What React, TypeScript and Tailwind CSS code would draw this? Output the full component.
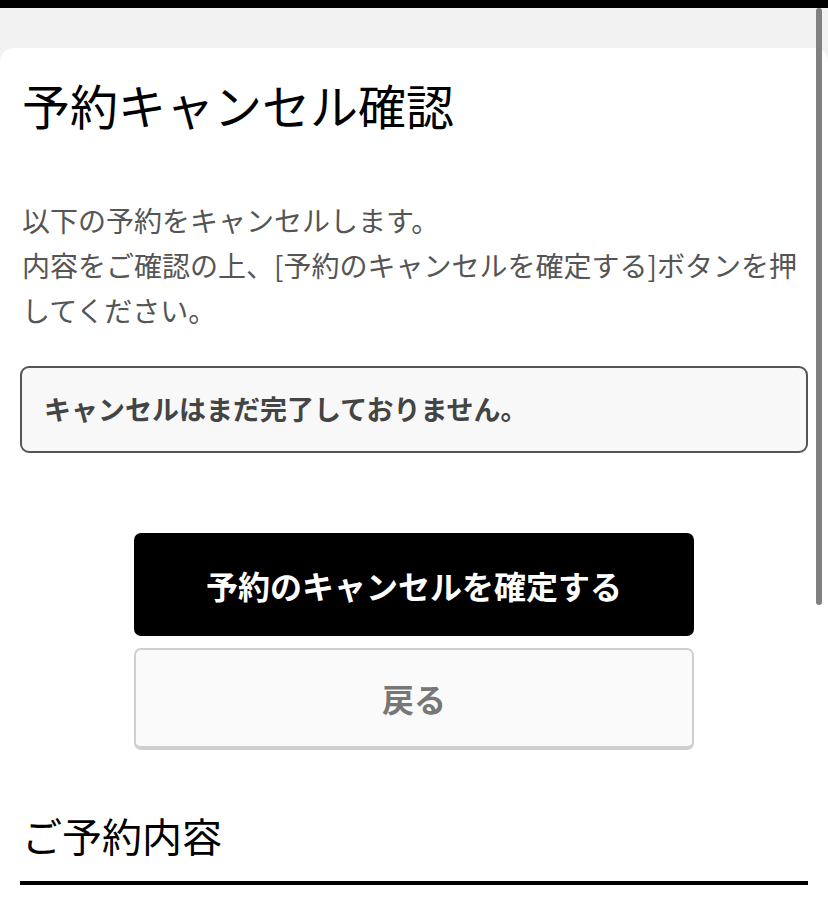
import React from 'react';

const jp = "font-['Hiragino_Sans','Noto_Sans_CJK_JP',sans-serif]";

const App: React.FC = () => {
    return (
        <div className={`relative w-[828px] h-[897px] overflow-hidden bg-[#f2f2f2] ${jp}`}>
            <div className="h-2 bg-black" />
            <div className="h-10" />

            <div className="bg-white rounded-tl-[14px] rounded-tr-[14px] h-full px-5">
                <h1 className="pt-[28px] pl-[2px] text-[48px] leading-[56px] text-black">
                    予約キャンセル確認
                </h1>

                <p className="mt-[66px] pl-[2px] text-[28px] leading-[45px] text-[#555]">
                    以下の予約をキャンセルします。
                    <br />
                    内容をご確認の上、[予約のキャンセルを確定する]ボタンを押してください。
                </p>

                <div className="mt-[33px] h-[87px] flex items-center px-[22px] border-2 border-[#555] rounded-[9px] bg-[#f8f8f8]">
                    <span className="text-[27px] font-bold text-[#444]">
                        キャンセルはまだ完了しておりません。
                    </span>
                </div>

                <div className="mt-[80px] flex flex-col items-center gap-3">
                    <button className="w-[560px] h-[103px] bg-black rounded-[7px] text-white text-[32px] font-bold">
                        予約のキャンセルを確定する
                    </button>
                    <button className="w-[560px] h-[102px] bg-[#fafafa] border-2 border-b-4 border-[#cfcfcf] rounded-[7px] text-[#777] text-[32px] font-bold">
                        戻る
                    </button>
                </div>

                <h2 className="mt-[60px] pl-[2px] text-[40px] leading-[50px] text-black">
                    ご予約内容
                </h2>
                <div className="mt-[21px] h-1 bg-black" />
            </div>

            <div className="absolute left-[816px] top-2 w-[6px] h-[597px] rounded-full bg-[#808080]" />
        </div>
    );
};

export default App;
